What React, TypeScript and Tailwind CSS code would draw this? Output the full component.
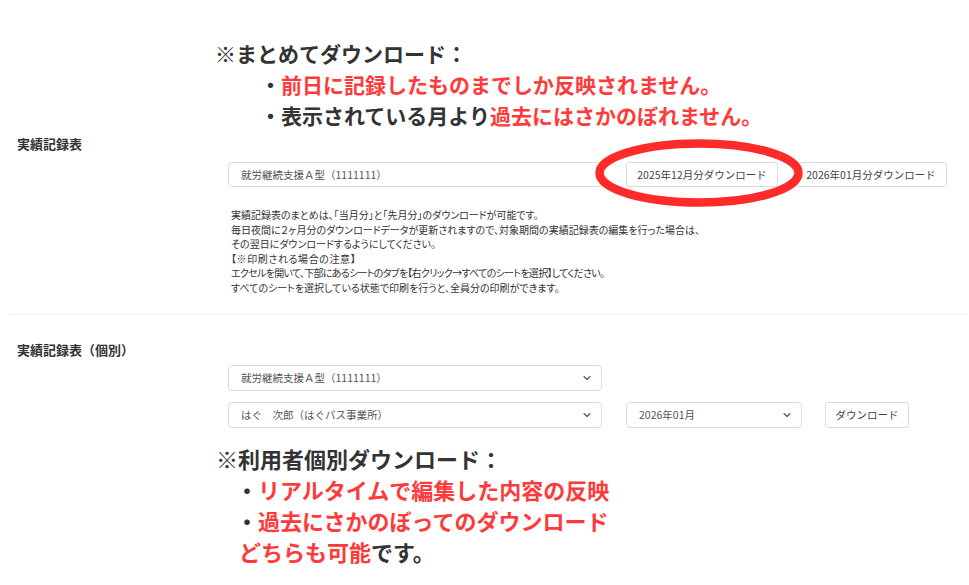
import { ChevronDown } from "lucide-react";

const jp = "font-['Noto_Sans_CJK_JP','Noto_Sans',sans-serif]";

// 注釈（画像上の赤字コメント）
function Note({ children, className = "" }: { children: React.ReactNode; className?: string }) {
  return <p className={`font-bold whitespace-nowrap ${className}`}>{children}</p>;
}

function SelectBox({ value, className }: { value: string; className: string }) {
  return (
    <div
      className={`flex h-[26px] items-center justify-between rounded-[4px] border border-[#dcdcdc] bg-white pl-3 pr-2 text-[10.5px] text-[#555] ${className}`}
    >
      <span>{value}</span>
      <ChevronDown size={12} strokeWidth={2.2} className="text-[#555]" />
    </div>
  );
}

function Btn({ children, className = "" }: { children: React.ReactNode; className?: string }) {
  return (
    <button
      type="button"
      className={`flex h-[25px] items-center justify-center rounded-[3px] border border-[#dcdcdc] bg-white px-[10px] text-[10.5px] text-[#444] whitespace-nowrap ${className}`}
    >
      {children}
    </button>
  );
}

export default function App() {
  return (
    <div className={`relative h-[585px] w-[969px] overflow-hidden bg-white text-[#333] ${jp}`}>
      {/* 上部の注釈 */}
      <div className="ml-[215px] pt-[38px] text-[21px] leading-[31px] text-[#333]">
        <Note>※まとめてダウンロード：</Note>
        <Note className="ml-[45px]">
          ・<span className="text-[#ff3a3a]">前日に記録したものまでしか反映されません。</span>
        </Note>
        <Note className="ml-[45px]">
          ・表示されている月より<span className="text-[#ff3a3a]">過去にはさかのぼれません。</span>
        </Note>
      </div>

      {/* 実績記録表 */}
      <div className="mt-[6px] pl-[17px]">
        <h2 className="text-[13px] font-bold leading-[14px]">実績記録表</h2>
        <div className="mt-[11px] ml-[211px] flex items-center">
          <div className="flex h-[25px] w-[376px] items-center rounded-[4px] border border-[#dcdcdc] pl-3 text-[10.5px] text-[#555]">
            就労継続支援Ａ型（1111111）
          </div>
          <Btn className="ml-[22px] w-[152px]">2025年12月分ダウンロード</Btn>
          <Btn className="ml-[17px] w-[152px]">2026年01月分ダウンロード</Btn>
        </div>
        <div className="mt-[21px] ml-[214px] text-[10px] leading-[14.6px] text-[#333] [font-feature-settings:'palt']">
          <p>実績記録表のまとめは、「当月分」と「先月分」のダウンロードが可能です。</p>
          <p>毎日夜間に２ヶ月分のダウンロードデータが更新されますので、対象期間の実績記録表の編集を行った場合は、</p>
          <p>その翌日にダウンロードするようにしてください。</p>
          <p className="tracking-[0.6px]">【※印刷される場合の注意】</p>
          <p className="tracking-[-0.7px]">エクセルを開いて、下部にあるシートのタブを【右クリック→すべてのシートを選択】してください。</p>
          <p>すべてのシートを選択している状態で印刷を行うと、全員分の印刷ができます。</p>
        </div>
      </div>

      <div className="mx-[9px] mt-[18px] h-px w-[956px] bg-[#eeeeee]" />

      {/* 実績記録表（個別） */}
      <div className="mt-[28px] pl-[17px]">
        <h2 className="text-[13px] font-bold leading-[14px]">実績記録表（個別）</h2>
        <div className="mt-[8px] ml-[211px] flex flex-col gap-[11px]">
          <SelectBox value="就労継続支援Ａ型（1111111）" className="w-[374px]" />
          <div className="flex items-center">
            <SelectBox value="はぐ　次郎（はぐパス事業所）" className="w-[374px]" />
            <SelectBox value="2026年01月" className="ml-[24px] w-[176px]" />
            <Btn className="ml-[23px] h-[26px] w-[84px]">ダウンロード</Btn>
          </div>
        </div>
      </div>

      {/* 下部の注釈 */}
      <div className="ml-[216px] mt-[15px] text-[22px] leading-[31px] text-[#333]">
        <Note>※利用者個別ダウンロード：</Note>
        <Note className="ml-[20px]">
          ・<span className="text-[#ff3a3a]">リアルタイムで編集した内容の反映</span>
        </Note>
        <Note className="ml-[20px]">
          ・<span className="text-[#ff3a3a]">過去にさかのぼってのダウンロード</span>
        </Note>
        <Note className="ml-[23px]">
          <span className="text-[#ff3a3a]">どちらも可能</span>です。
        </Note>
      </div>

      {/* 赤い楕円の囲み */}
      <svg className="pointer-events-none absolute left-[590px] top-[135px]" width="220" height="76" viewBox="0 0 220 76">
        <ellipse cx="109" cy="38" rx="99.5" ry="29.5" fill="none" stroke="#ff2a2a" strokeWidth="8.5" />
      </svg>
    </div>
  );
}
